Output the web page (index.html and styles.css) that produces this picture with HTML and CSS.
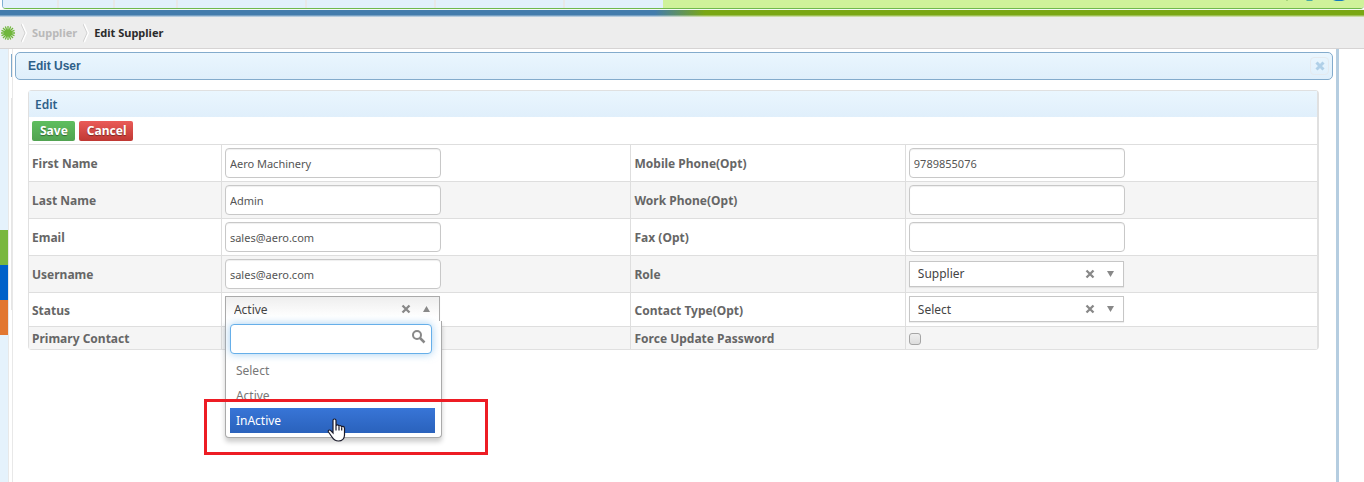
FILE: index.html
```html
<!DOCTYPE html>
<html lang="en">
<head>
<meta charset="utf-8">
<title>Edit Supplier</title>
<link rel="stylesheet" href="styles.css">
</head>
<body>
<header class="topbar">
  <div class="tabs"><i class="tab tab-a"></i><i class="tab tab-a"></i><i class="tab tab-b"></i><i class="tab tab-c"></i><i class="tab tab-c"></i><i class="tab tab-c"></i></div>
  <div class="tools">
    <svg width="60" height="2" viewBox="0 0 60 2" aria-hidden="true"><path d="M0 0h2v1H0z" fill="#a9d67d"/><path d="M20 0h7l-1 1h-5z" fill="#4aa9a4"/><path d="M47 0h12l-3 1h-6z" fill="#1479bd"/></svg>
  </div>
</header>
<div class="ribbon"></div>
<nav class="crumbs" aria-label="Breadcrumb">
  <a href="#" class="home" aria-label="Home"><svg width="16" height="16" viewBox="0 0 16 16"><path d="M8 1v14M1 8h14M3 3l10 10M13 3L3 13M5.300 1.500l5.400 13M10.700 1.500l-5.400 13M1.500 5.300l13 5.400M14.500 5.300l-13 5.400" stroke="#70b63c" stroke-width="1.300" fill="none"/><circle cx="8" cy="8" r="2.500" fill="#70b63c"/></svg></a>
  <svg class="chev" width="6" height="20" viewBox="0 0 6 20" aria-hidden="true"><path d="M1 1l4 9-4 9" fill="none" stroke="#fff" stroke-width="2"/><path d="M0 1l4 9-4 9" fill="none" stroke="#d0d0d0"/></svg>
  <a href="#" class="crumb">Supplier</a>
  <svg class="chev" width="6" height="20" viewBox="0 0 6 20" aria-hidden="true"><path d="M1 1l4 9-4 9" fill="none" stroke="#fff" stroke-width="2"/><path d="M0 1l4 9-4 9" fill="none" stroke="#d0d0d0"/></svg>
  <span class="crumb current" aria-current="page">Edit Supplier</span>
</nav>
<div class="layout">
  <aside class="side"><i class="chip green"></i><i class="chip blue"></i><i class="chip orange"></i></aside>
  <div class="gutter"><i class="stub"></i><i class="rail"></i></div>
  <main class="page">
    <div class="titlebar">
      <h1>Edit User</h1>
      <button type="button" class="close" aria-label="Close"><svg width="10" height="10" viewBox="0 0 10 10"><path d="M1.500 1.500l7 7M8.500 1.500l-7 7" stroke="#b0d0e8" stroke-width="3"/></svg></button>
    </div>
    <form class="card">
      <h2>Edit</h2>
      <div class="actions"><button type="button" class="btn save">Save</button><button type="button" class="btn cancel">Cancel</button></div>
      <table class="fields">
        <colgroup><col class="c1"><col class="c2"><col class="c3"><col class="c4"></colgroup>
        <tr>
          <th><label for="first">First Name</label></th><td><input class="text" id="first" type="text" value="Aero Machinery"></td>
          <th><label for="mobile">Mobile Phone(Opt)</label></th><td><input class="text" id="mobile" type="text" value="9789855076"></td>
        </tr>
        <tr>
          <th><label for="last">Last Name</label></th><td><input class="text" id="last" type="text" value="Admin"></td>
          <th><label for="work">Work Phone(Opt)</label></th><td><input class="text" id="work" type="text"></td>
        </tr>
        <tr>
          <th><label for="email">Email</label></th><td><input class="text" id="email" type="text" value="sales@aero.com"></td>
          <th><label for="fax">Fax (Opt)</label></th><td><input class="text" id="fax" type="text"></td>
        </tr>
        <tr>
          <th><label for="user">Username</label></th><td><input class="text" id="user" type="text" value="sales@aero.com"></td>
          <th><label for="role">Role</label></th>
          <td><div class="pick"><select id="role"><option>Supplier</option></select><svg class="marks" width="32" height="10" viewBox="0 0 32 10" aria-hidden="true"><path d="M1.500 1.500l7 7M8.500 1.500l-7 7" stroke="#888" stroke-width="2.300"/><path d="M22 2h7l-3.500 6z" fill="#888"/></svg></div></td>
        </tr>
        <tr>
          <th><label for="status">Status</label></th>
          <td>
            <div class="pick open"><select id="status"><option>Active</option></select><svg class="marks" width="32" height="10" viewBox="0 0 32 10" aria-hidden="true"><path d="M1.500 1.500l7 7M8.500 1.500l-7 7" stroke="#888" stroke-width="2.300"/><path d="M22 8h7l-3.500-6z" fill="#888"/></svg>
              <div class="menu">
                <div class="search"><input type="text" aria-label="Search status"><svg width="14" height="14" viewBox="0 0 14 14" aria-hidden="true"><circle cx="5" cy="5" r="4" fill="none" stroke="#888" stroke-width="2"/><path d="M8 8l4.500 4.500" stroke="#888" stroke-width="2.500"/></svg></div>
                <ul role="listbox" aria-label="Status">
                  <li role="option">Select</li>
                  <li role="option">Active</li>
                  <li role="option" class="hot" aria-selected="true">InActive</li>
                </ul>
                <i class="callout"></i>
                <svg class="pointer" width="19" height="24" viewBox="0 0 19 24" aria-hidden="true"><path d="M6 15V2.500C6 .5 9 .5 9 2.500V8c0-1.500 3-1.500 3 .5 0-1.500 2.700-1.200 2.700.7 0-1.300 2.800-1.200 2.800 1V17c0 3.500-2.500 6-6 6-3.500 0-5-1.500-6.500-4L1.500 14c-1-1.700 1-2.800 2.500-1.200z" fill="#fff" stroke="#1a1a2a" stroke-width="1.200"/><path d="M9 8v4.500M12 8.500v4M14.700 9.200v3.300" stroke="#1a1a2a" stroke-width="1.200"/></svg>
              </div>
            </div>
          </td>
          <th><label for="ctype">Contact Type(Opt)</label></th>
          <td><div class="pick"><select id="ctype"><option>Select</option></select><svg class="marks" width="32" height="10" viewBox="0 0 32 10" aria-hidden="true"><path d="M1.500 1.500l7 7M8.500 1.500l-7 7" stroke="#888" stroke-width="2.300"/><path d="M22 2h7l-3.500 6z" fill="#888"/></svg></div></td>
        </tr>
        <tr class="short">
          <th><label for="primary">Primary Contact</label></th><td><input class="check" id="primary" type="checkbox"></td>
          <th><label for="force">Force Update Password</label></th><td><input class="check" id="force" type="checkbox"></td>
        </tr>
      </table>
    </form>
  </main>
</div>
</body>
</html>
```
FILE: styles.css
```css
* { box-sizing: border-box; }
body {
  margin: 0;
  min-height: 100vh;
  display: flex;
  flex-direction: column;
  background: #fff;
  font: 12px/16px "Noto Sans", sans-serif;
  color: #444;
}
.topbar {
  display: flex;
  height: 9px;
  margin-left: 2px;
  border: solid #70b94c;
  border-width: 0 0 1px;
  border-left: 1px solid #7fb0d3;
  border-radius: 0 0 4px 4px;
  overflow: hidden;
}
.tabs { display: flex; flex: 0 0 660px; background: #e2f0fb; }
.tab { border-right: 2px solid #e8e8e8; }
.tab-a { width: 56px; }
.tab-b { width: 63px; }
.tab-c { width: 129px; }
.tools { flex: 1; display: flex; justify-content: flex-end; background: #cff29a; padding-right: 18px; }
.ribbon {
  height: 8px;
  border-top: 1px solid #f4f9f4;
  background:
    linear-gradient(#0000 5px, #ffffff44 5px 6px, #ffffff99 6px),
    linear-gradient(90deg, #437cac 0 655px, #7aa714 705px);
}
.crumbs {
  display: flex;
  align-items: center;
  height: 32px;
  background: #ededed;
  border-bottom: 1px solid #d6d4d4;
  font: 700 11px/16px "Noto Sans", sans-serif;
}
.home { display: flex; width: 21px; }
.crumb { color: #b9b9b9; text-decoration: none; padding: 0 6px 0 5px; }
.current { color: #2b2b2b; }
.layout { flex: 1; display: flex; }
.side { width: 8px; padding-top: 181px; background: #e5f2fc; }
.chip { display: block; height: 35px; }
.green { background: #79b73f; }
.blue { background: #0061c9; }
.orange { background: #e27731; }
.gutter { width: 5px; padding: 5px 0 0 2px; border: solid #e8e8e8; border-width: 0 1px; }
.gutter i { display: block; width: 1px; }
.stub { height: 23px; background: #7fa9cb; }
.rail { height: 212px; margin-top: 21px; background: #e6e6e6; }
.page {
  flex: 1;
  padding: 3px 3px 0 2px;
  margin-right: 25px;
  border-right: 3px solid #b5cde0;
}
.titlebar {
  display: flex;
  align-items: center;
  justify-content: space-between;
  height: 28px;
  padding: 0 3px 0 12px;
  border: 1px solid #83abcc;
  border-radius: 5px;
  background: linear-gradient(#eaf6fe, #dfeffb);
}
h1, h2 { margin: 0; color: #2e6088; }
h1 { font: 700 12px/16px "Liberation Sans", Arial, sans-serif; }
.close {
  display: grid;
  place-items: center;
  width: 19px;
  height: 18px;
  padding: 0;
  border: 1px solid #e4eaef;
  border-radius: 4px;
  background: none;
}
.card {
  margin: 10px 14px 0 13px;
  border: 1px solid #e0e0e0;
  border-right-width: 2px;
  border-radius: 4px;
}
h2 {
  height: 26px;
  padding: 0 6px;
  font: 600 12px/27px "Noto Sans", sans-serif;
  background: linear-gradient(#eaf6fe, #e0effb);
}
.actions { display: flex; gap: 4px; padding: 4px 3px 3px; }
.btn {
  height: 20px;
  padding: 0 7px 0 8px;
  border: 0;
  border-radius: 2px;
  color: #fff;
  font: 700 12px/20px "Noto Sans", sans-serif;
  text-shadow: 0 1px 1px #0006;
}
.save { background: linear-gradient(#5fbe5f, #51a351); }
.cancel { background: linear-gradient(#ea5b58, #bf3833); }
.fields { width: 100%; table-layout: fixed; border-collapse: separate; border-spacing: 0; }
.c1 { width: 14.9%; }
.c2 { width: 31.8%; }
.c3 { width: 21.3%; }
.fields th, .fields td { border-top: 1px solid #dedede; border-left: 1px solid #dedede; padding: 3px; text-align: left; }
.fields th:first-child { border-left: 0; }
.fields tr:nth-child(even) { background: #f5f5f5; }
.fields th { font-weight: 700; color: #666; padding: 4px 3px 2px; }
.fields .short th { padding: 4px 3px 2px; }
.fields .short td { padding: 3px; }
.text {
  display: block;
  width: 216px;
  height: 30px;
  padding: 0 4px;
  border: 1px solid #c8c8c8;
  border-radius: 4px;
  box-shadow: inset 0 1px 1px #0001;
  font: 11px/16px "Noto Sans", sans-serif;
  color: #555;
}
.check {
  display: block;
  appearance: none;
  width: 12px;
  height: 12px;
  margin: 1px 0 0;
  border: 1px solid #a5a5a5;
  border-radius: 3px;
  background: linear-gradient(#eee, #ddd);
}
.pick {
  position: relative;
  width: 215px;
  height: 26px;
  margin-bottom: 1px;
  border: 1px solid #c6c6c6;
  background: #fff;
  box-shadow: 0 1px 1px #0001;
}
.pick select {
  appearance: none;
  display: block;
  width: 100%;
  height: 25px;
  padding: 0 8px;
  border: 0;
  background: none;
  font: 12px/16px "Noto Sans", sans-serif;
  color: #444;
}
.marks { position: absolute; right: 6px; top: 7px; }
.open { border-color: #aaa; border-bottom: 0; background: linear-gradient(#eee, #fff 80%); }
.menu {
  position: absolute;
  z-index: 2;
  top: 24px;
  left: -1px;
  width: 217px;
  padding: 3px 6px 4px 4px;
  border: 1px solid #aaa;
  border-top: 0;
  border-radius: 0 0 4px 4px;
  background: #fff;
  box-shadow: 0 4px 5px #0003;
}
.search { position: relative; margin-right: 3px; }
.search input {
  display: block;
  width: 100%;
  height: 30px;
  border: 1px solid #66afe9;
  border-radius: 4px;
  box-shadow: 0 0 8px #66afe999;
}
.search svg { position: absolute; right: 6px; top: 6px; }
.menu ul { list-style: none; margin: 4px 0 0; padding: 0; }
.menu li { height: 25px; padding: 0 6px; line-height: 25px; color: #777; }
.menu .hot { background: linear-gradient(#3875d7, #2a62bc); color: #fff; }
.callout {
  position: absolute;
  left: -22px;
  top: 78px;
  width: 284px;
  height: 56px;
  border: 3px solid #ed1c24;
}
.pointer { position: absolute; left: 101px; top: 97px; }
```
